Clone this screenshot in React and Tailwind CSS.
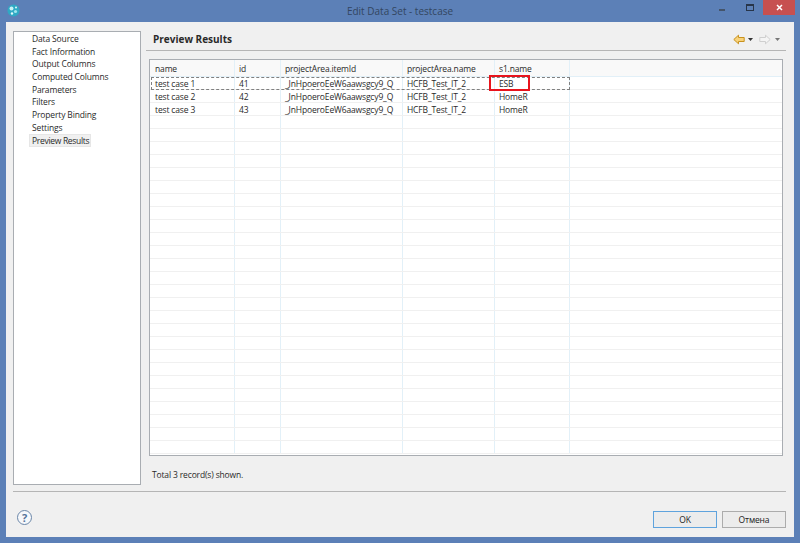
const nav = ["Data Source","Fact Information","Output Columns","Computed Columns","Parameters","Filters","Property Binding","Settings","Preview Results"];
const cols = "grid grid-cols-[85px_46px_122px_92px_75px_1fr]";
const rows = [
  ["test case 1","41","_JnHpoeroEeW6aawsgcy9_Q","HCFB_Test_IT_2","ESB"],
  ["test case 2","42","_JnHpoeroEeW6aawsgcy9_Q","HCFB_Test_IT_2","HomeR"],
  ["test case 3","43","_JnHpoeroEeW6aawsgcy9_Q","HCFB_Test_IT_2","HomeR"],
];
const cell = "border-r border-[#e2f0f8] overflow-hidden whitespace-nowrap";
const firstCell = "pl-[5px]";
const otherCell = "pl-[4px]";

function Logo() {
  return (
    <svg width="13" height="13" viewBox="0 0 13 13">
      <circle cx="6.5" cy="6.5" r="6" fill="#2fa9c4" />
      <circle cx="4.5" cy="4.5" r="2" fill="#c8f2f5" />
      <circle cx="8.5" cy="7.5" r="1.6" fill="#9ee6ee" />
      <circle cx="5" cy="9.5" r="1.2" fill="#e3fafa" />
      <circle cx="9" cy="3.5" r="1" fill="#e3fafa" />
    </svg>
  );
}
function ArrowLeft({ fill, stroke }) {
  return (
    <svg width="12" height="11" viewBox="0 0 12 11">
      <path d="M0.8 5.5 L5.5 1.2 V3.5 H11.2 V7.5 H5.5 V9.8 Z" fill={fill} stroke={stroke} strokeWidth="1" strokeLinejoin="round" />
    </svg>
  );
}
function ArrowRight({ fill, stroke }) {
  return (
    <svg width="12" height="11" viewBox="0 0 12 11">
      <path d="M11.2 5.5 L6.5 1.2 V3.5 H0.8 V7.5 H6.5 V9.8 Z" fill={fill} stroke={stroke} strokeWidth="1" strokeLinejoin="round" />
    </svg>
  );
}
function Caret({ color }) {
  return (
    <svg width="5" height="3" viewBox="0 0 5 3"><path d="M0 0H5L2.5 3Z" fill={color} /></svg>
  );
}

export default function App() {
  return (
    <div className="w-[800px] h-[543px] flex flex-col bg-[#5c80b7] px-[6px] pb-[6px] overflow-hidden text-[8.5px] tracking-[-0.15px] leading-[13px] text-[#2a2a2a] font-['Open_Sans','Noto_Sans',sans-serif]">
      <div className="h-[22px] relative flex items-center justify-center shrink-0">
        <div className="absolute left-[1px] top-[4px]"><Logo /></div>
        <span className="text-[10px] tracking-normal text-[#33465f]">Edit Data Set - testcase</span>
        <div className="absolute right-[-1px] top-0 flex items-start">
          <div className="w-[30px] h-[15px] flex items-center justify-center">
            <div className="w-[6px] h-[2px] mt-[4px] bg-[#44546a]" />
          </div>
          <div className="w-[26px] h-[15px] flex items-center justify-center">
            <div className="w-[8px] h-[7px] border border-t-2 border-[#27354a]" />
          </div>
          <div className="w-[32px] h-[15px] bg-[#c75050] flex items-center justify-center">
            <svg width="7" height="7" viewBox="0 0 7 7"><path d="M1 1L6 6M6 1L1 6" stroke="#fff" strokeWidth="1.5" /></svg>
          </div>
        </div>
      </div>

      <div className="flex-1 bg-[#f0f0f0] flex flex-col pl-[7px] pr-[8px] min-h-0">
        <div className="h-[454px] mt-[9px] flex shrink-0">
          <div className="w-[128px] shrink-0 bg-white border border-[#a9adb2] pl-[10px] pt-[1px]">
            {nav.map((n, i) => (
              <div key={n} className="h-[12.7px] leading-[12.7px]">
                {i === 8 ? (
                  <span className="inline-block bg-[#f0f0f0] border border-[#e6e6e6] pl-[2px] pr-[1px] ml-[5px] -mt-[1px] h-[13px] leading-[11px] tracking-[-0.3px]">{n}</span>
                ) : (
                  <span className="inline-block pl-[8px]">{n}</span>
                )}
              </div>
            ))}
          </div>
          <div className="flex-1 flex flex-col pl-[5px] min-w-0">
            <div className="h-[20px] flex items-center shrink-0 border-b border-[#b5b5b5] pl-[7px]">
              <span className="text-[10px] tracking-normal font-bold text-[#2a2a2a] mt-[-3px]">Preview Results</span>
              <div className="ml-auto flex items-center mt-[-3px] pr-[6px]">
                <ArrowLeft fill="#f8d27a" stroke="#c8921e" />
                <div className="ml-[3px] mr-[6px]"><Caret color="#333" /></div>
                <ArrowRight fill="#f4f4f4" stroke="#cfcfcf" />
                <div className="ml-[4px]"><Caret color="#777" /></div>
              </div>
            </div>
            <div className="mt-[8px] ml-[3px] mr-[3px] h-[397px] shrink-0 bg-white border border-[#a9adb2] overflow-hidden relative">
              <div className={`${cols} h-[17px] bg-[#f9f9f9] border-b border-[#e2f0f8] items-stretch`}>
                {["name","id","projectArea.itemId","projectArea.name","s1.name"].map((h, c) => (
                  <div key={h} className={`${cell} ${c === 0 ? firstCell : otherCell} leading-[17px]`}>{h}</div>
                ))}
                <div />
              </div>
              {Array.from({ length: 29 }).map((_, i) => {
                const r = rows[i];
                return (
                  <div key={i} className={`${cols} h-[13px] border-b border-[#f0f0f0] leading-[14px]`}>
                    {[0,1,2,3,4].map(c => (
                      <div key={c} className={`${cell} ${c === 0 ? firstCell : otherCell}`}>{r ? r[c] : ""}</div>
                    ))}
                    <div />
                  </div>
                );
              })}
              <div className="absolute left-[1px] top-[17px] w-[419px] h-[13px] border border-dashed border-[#808080]" />
              <div className="absolute left-[339px] top-[15px] w-[41px] h-[16px] border-2 border-[#e8141c]" />
            </div>
            <div className="pl-[6px] mt-[12px]">Total 3 record(s) shown.</div>
          </div>
        </div>
        <div className="h-px bg-[#b5b5b5] mt-[6px] shrink-0" />
        <div className="flex-1 flex items-start">
          <div className="ml-[4px] mt-[18px] w-[15px] h-[15px] rounded-full border-[1.5px] border-[#6a86a8] flex items-center justify-center text-[#55749a] text-[11px] font-bold leading-none bg-[#f6f8fb]">?</div>
          <div className="ml-auto mt-[19px] flex gap-[5px] text-[#222]">
            <div className="w-[64px] h-[17px] flex items-center justify-center border border-[#5fa3dd] bg-[#ececec]">OK</div>
            <div className="w-[64px] h-[17px] flex items-center justify-center border border-[#acacac] bg-[#ececec]">Отмена</div>
          </div>
        </div>
      </div>
    </div>
  );
}
